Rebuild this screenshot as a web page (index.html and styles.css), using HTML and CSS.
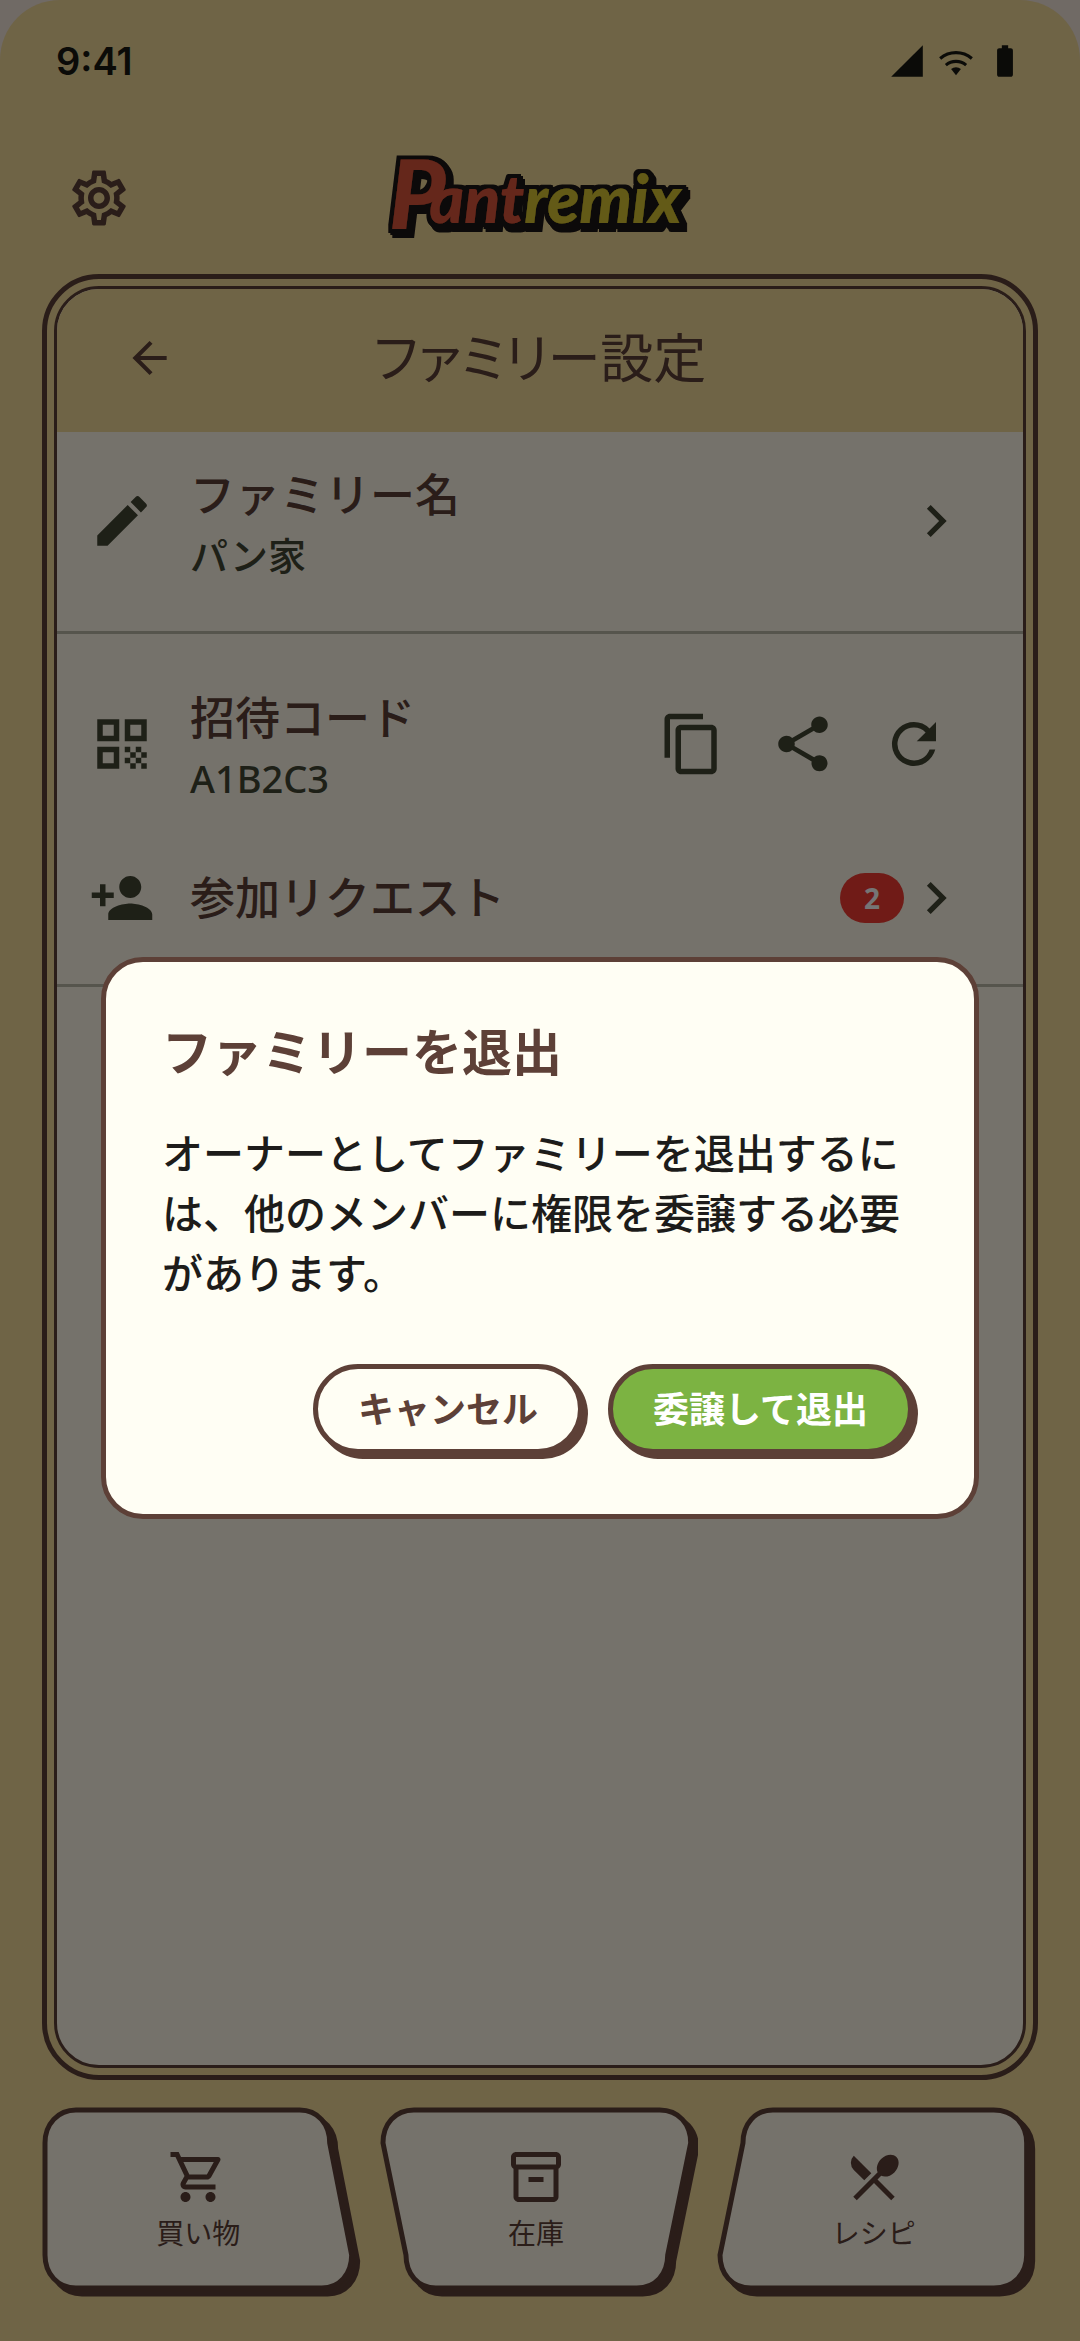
FILE: index.html
```html
<!DOCTYPE html>
<html lang="ja">
<head>
  <meta charset="UTF-8" />
  <title>ファミリー設定</title>
  <meta name="viewport" content="width=device-width, initial-scale=1.0" />
  <link rel="stylesheet" href="styles.css">
</head>
<body>
  <div class="app">
    <div class="status-bar">
      <span class="time">9:41</span>
      <div class="status-icons">
        <svg viewBox="0 0 24 24"><path d="M2 22h20V2z"/></svg>
        <svg viewBox="0 0 24 24"><path d="M12 21l3.100-3.900a4.900 4.900 0 0 0-6.200 0z"/><path class="line" d="M2 10.400a15.400 15.400 0 0 1 20 0M5.600 14.600a10 10 0 0 1 12.800 0"/></svg>
        <svg viewBox="0 0 24 24"><path d="M15.670 4H14V2h-4v2H8.330C7.600 4 7 4.600 7 5.330v15.330C7 21.400 7.600 22 8.330 22h7.330c.74 0 1.340-.6 1.340-1.330V5.330C17 4.600 16.400 4 15.670 4z"/></svg>
      </div>
    </div>

    <header class="app-bar">
      <button class="icon-button" type="button" aria-label="設定">
        <svg viewBox="0 0 24 24"><path d="M19.430 12.980c.04-.32.07-.64.07-.98 0-.34-.03-.66-.07-.98l2.110-1.650c.19-.15.24-.42.12-.64l-2-3.460c-.09-.16-.26-.25-.44-.25-.06 0-.12.010-.17.030l-2.490 1c-.52-.4-1.080-.73-1.690-.98l-.38-2.650C14.460 2.180 14.250 2 14 2h-4c-.25 0-.46.18-.49.42l-.38 2.650c-.61.25-1.170.59-1.690.98l-2.490-1c-.06-.02-.12-.03-.18-.03-.17 0-.34.090-.43.250l-2 3.460c-.13.22-.07.49.12.640l2.110 1.650c-.04.320-.07.650-.07.980s.03.660.070.980l-2.110 1.650c-.19.150-.24.420-.12.640l2 3.460c.09.160.26.250.44.250.06 0 .12-.01.170-.03l2.490-1c.52.400 1.080.730 1.690.980l.38 2.650c.03.240.24.420.49.420h4c.25 0 .46-.18.490-.42l.38-2.650c.61-.25 1.170-.59 1.690-.98l2.490 1c.06.020.12.030.18.030.17 0 .34-.09.430-.25l2-3.460c.12-.22.070-.49-.12-.64l-2.110-1.650zm-1.980-1.710c.04.310.05.520.05.730 0 .21-.02.430-.05.730l-.14 1.130.89.700 1.080.840-.7 1.210-1.270-.51-1.040-.42-.9.680c-.43.320-.84.560-1.250.730l-1.060.43-.16 1.130-.2 1.350h-1.400l-.19-1.350-.16-1.130-1.060-.43c-.43-.18-.83-.41-1.230-.71l-.91-.7-1.060.43-1.270.51-.7-1.210 1.080-.84.89-.7-.14-1.130c-.03-.31-.05-.54-.05-.74s.02-.43.050-.73l.14-1.130-.89-.7-1.080-.84.7-1.210 1.270.51 1.040.42.9-.68c.43-.32.840-.56 1.250-.73l1.060-.43.160-1.130.2-1.350h1.390l.19 1.350.16 1.130 1.060.43c.43.180.83.410 1.230.710l.91.700 1.060-.43 1.270-.51.7 1.210-1.070.850-.89.700.14 1.130zM12 8c-2.210 0-4 1.790-4 4s1.790 4 4 4 4-1.790 4-4-1.790-4-4-4zm0 6c-1.100 0-2-.9-2-2s.9-2 2-2 2 .9 2 2-.9 2-2 2z"/></svg>
      </button>
      <svg class="logo" viewBox="0 0 312 88" role="img" aria-label="Pantremix">
        <!-- black outline with a drop to the lower right -->
        <filter id="outline" x="-10%" y="-20%" width="120%" height="150%">
          <feMorphology in="SourceAlpha" operator="dilate" radius="4" result="fat"/>
          <feOffset in="fat" dx="2" dy="2" result="mid"/>
          <feOffset in="fat" dx="4" dy="5" result="drop"/>
          <feMerge result="shape">
            <feMergeNode in="drop"/>
            <feMergeNode in="mid"/>
            <feMergeNode in="fat"/>
          </feMerge>
          <feFlood flood-color="#1c1616"/>
          <feComposite in2="shape" operator="in" result="black"/>
          <feMerge>
            <feMergeNode in="black"/>
            <feMergeNode in="SourceGraphic"/>
          </feMerge>
        </filter>
        <text class="logo-red" x="5" y="75" filter="url(#outline)"><tspan class="logo-p">P</tspan><tspan dx="-16" dy="-6">ant</tspan><tspan class="logo-yellow">remix</tspan></text>
      </svg>
    </header>

    <main class="frame">
      <div class="panel">
        <div class="panel-header">
          <button class="back-button" type="button" aria-label="戻る">
            <svg viewBox="0 0 24 24"><path class="line" d="M20 12H5M12.500 4.500L5 12l7.500 7.500"/></svg>
          </button>
          <h1>ファミリー設定</h1>
        </div>

        <a class="row" href="#name">
          <svg viewBox="0 0 24 24"><path d="M3 17.250V21h3.750L17.810 9.940l-3.750-3.750L3 17.250zM20.710 7.040a1 1 0 0 0 0-1.410l-2.340-2.340a1 1 0 0 0-1.410 0l-1.830 1.830 3.750 3.750 1.830-1.830z"/></svg>
          <span class="row-text">
            <span class="row-title">ファミリー名</span>
            <span class="row-sub">パン家</span>
          </span>
          <svg class="chevron" viewBox="0 0 24 24"><path d="M10 6L8.590 7.410 13.170 12l-4.580 4.590L10 18l6-6z"/></svg>
        </a>
        <hr>
        <div class="row">
          <svg viewBox="0 0 24 24"><path d="M3 11h8V3H3v8zm2-6h4v4H5V5zM3 21h8v-8H3v8zm2-6h4v4H5v-4zM13 3v8h8V3h-8zm6 6h-4V5h4v4zM19 19h2v2h-2zM13 13h2v2h-2zM15 15h2v2h-2zM13 17h2v2h-2zM15 19h2v2h-2zM17 17h2v2h-2zM17 13h2v2h-2zM19 15h2v2h-2z"/></svg>
          <span class="row-text">
            <span class="row-title">招待コード</span>
            <span class="row-sub">A1B2C3</span>
          </span>
          <div class="row-actions">
            <button type="button" aria-label="コピー">
              <svg viewBox="0 0 24 24"><path d="M16 1H4c-1.100 0-2 .9-2 2v14h2V3h12V1zm3 4H8c-1.100 0-2 .9-2 2v14c0 1.100.9 2 2 2h11c1.100 0 2-.9 2-2V7c0-1.100-.9-2-2-2zm0 16H8V7h11v14z"/></svg>
            </button>
            <button type="button" aria-label="共有">
              <svg viewBox="0 0 24 24"><path d="M18 16.080c-.76 0-1.440.3-1.960.77L8.910 12.700c.05-.23.090-.46.090-.7s-.04-.47-.09-.7l7.050-4.110c.54.500 1.250.810 2.040.810 1.660 0 3-1.340 3-3s-1.340-3-3-3-3 1.340-3 3c0 .24.040.47.090.7L8.040 9.810C7.500 9.310 6.790 9 6 9c-1.660 0-3 1.340-3 3s1.340 3 3 3c.79 0 1.500-.31 2.040-.81l7.120 4.160c-.05.210-.08.430-.08.650 0 1.610 1.310 2.920 2.920 2.920s2.920-1.310 2.920-2.920-1.310-2.920-2.920-2.920z"/></svg>
            </button>
            <button type="button" aria-label="更新">
              <svg viewBox="0 0 24 24"><path d="M17.650 6.350A7.960 7.960 0 0 0 12 4a8 8 0 1 0 7.730 10h-2.080A6 6 0 1 1 12 6c1.660 0 3.140.69 4.220 1.780L13 11h7V4l-2.350 2.350z"/></svg>
            </button>
          </div>
        </div>
        <a class="row row-single" href="#requests">
          <svg viewBox="0 0 24 24"><path d="M15 12c2.210 0 4-1.790 4-4s-1.790-4-4-4-4 1.790-4 4 1.790 4 4 4zm-9-2V7H4v3H1v2h3v3h2v-3h3v-2H6zm9 4c-2.670 0-8 1.340-8 4v2h16v-2c0-2.660-5.330-4-8-4z"/></svg>
          <span class="row-text"><span class="row-title">参加リクエスト</span></span>
          <span class="badge">2</span>
          <svg class="chevron" viewBox="0 0 24 24"><path d="M10 6L8.590 7.410 13.170 12l-4.580 4.590L10 18l6-6z"/></svg>
        </a>
        <hr>
      </div>
    </main>

    <nav class="tabs">
      <a class="tab" href="#shopping">
        <svg class="tab-shape" viewBox="0 0 319 190" preserveAspectRatio="none">
          <path class="tab-shadow" transform="translate(6 6)" d="M34 3H258C276 3 288 17 288 36L310 148C310 167 298 181 280 181H34C16 181 3 167 3 148V36C3 17 16 3 34 3Z"/>
          <path d="M34 3H258C276 3 288 17 288 36L310 148C310 167 298 181 280 181H34C16 181 3 167 3 148V36C3 17 16 3 34 3Z"/>
        </svg>
        <span class="tab-content">
          <svg viewBox="0 0 24 24"><path d="M15.550 13c.75 0 1.410-.41 1.750-1.030l3.580-6.490A.996.996 0 0 0 20.010 4H5.210l-.94-2H1v2h2l3.600 7.590-1.350 2.440C4.520 15.370 5.480 17 7 17h12v-2H7l1.100-2h7.450zM6.160 6h12.150l-2.760 5H8.530L6.160 6zM7 18c-1.100 0-1.990.9-1.990 2S5.900 22 7 22s2-.9 2-2-.9-2-2-2zm10 0c-1.100 0-1.990.9-1.990 2s.89 2 1.990 2 2-.9 2-2-.9-2-2-2z"/></svg>
          <span>買い物</span>
        </span>
      </a>
      <a class="tab" href="#stock">
        <svg class="tab-shape" viewBox="0 0 319 190" preserveAspectRatio="none">
          <path class="tab-shadow" transform="translate(6 6)" d="M34 3H280C299 3 311 17 311 36L288 148C288 167 276 181 257 181H56C38 181 26 167 26 148L3 36C3 17 15 3 34 3Z"/>
          <path d="M34 3H280C299 3 311 17 311 36L288 148C288 167 276 181 257 181H56C38 181 26 167 26 148L3 36C3 17 15 3 34 3Z"/>
        </svg>
        <span class="tab-content">
          <svg viewBox="0 0 24 24"><path d="M20 2H4c-1 0-2 .9-2 2v3.010c0 .72.430 1.340 1 1.690V20c0 1.100 1.100 2 2 2h14c.9 0 2-.9 2-2V8.700c.57-.35 1-.97 1-1.690V4c0-1.100-1-2-2-2zm-1 18H5V9h14v11zm1-13H4V4h16v3zM9 12h6v2H9z"/></svg>
          <span>在庫</span>
        </span>
      </a>
      <a class="tab" href="#recipe">
        <svg class="tab-shape" viewBox="0 0 319 190" preserveAspectRatio="none">
          <path class="tab-shadow" transform="translate(6 6)" d="M56 3H277C297 3 310 17 310 36V148C310 167 297 181 277 181H34C15 181 3 167 3 148L26 36C26 17 38 3 56 3Z"/>
          <path d="M56 3H277C297 3 310 17 310 36V148C310 167 297 181 277 181H34C15 181 3 167 3 148L26 36C26 17 38 3 56 3Z"/>
        </svg>
        <span class="tab-content">
          <svg viewBox="0 0 24 24"><path d="M8.100 13.340l2.830-2.830L3.910 3.500a4.008 4.008 0 0 0 0 5.660l4.190 4.180zm6.780-1.810c1.530.71 3.680.210 5.270-1.380 1.910-1.910 2.280-4.650.81-6.120-1.460-1.460-4.200-1.100-6.120.810-1.590 1.590-2.090 3.740-1.380 5.270L3.700 19.870l1.410 1.410L12 14.410l6.880 6.880 1.410-1.410L13.410 13l1.470-1.470z"/></svg>
          <span>レシピ</span>
        </span>
      </a>
    </nav>
  </div>

  <div class="scrim">
    <section class="dialog" role="dialog" aria-modal="true" aria-labelledby="dialogTitle">
      <h2 id="dialogTitle">ファミリーを退出</h2>
      <p>オーナーとしてファミリーを退出するには、他のメンバーに権限を委譲する必要があります。</p>
      <div class="dialog-actions">
        <button class="pill" type="button">キャンセル</button>
        <button class="pill pill-primary" type="button">委譲して退出</button>
      </div>
    </section>
  </div>
</body>
</html>
```

FILE: styles.css
```css
* {
  box-sizing: border-box;
}
body {
  margin: 0;
  background-color: #f3e6dc;
  color: #434634;
  font-family: "Noto Sans", "Noto Sans CJK JP", sans-serif;
}
h1, h2, p {
  margin: 0;
}
a {
  color: inherit;
  text-decoration: none;
}
button {
  padding: 0;
  border: none;
  background: none;
  color: inherit;
  font-family: inherit;
  cursor: pointer;
}
svg {
  display: block;
  fill: currentColor;
}
.line {
  fill: none;
  stroke: currentColor;
  stroke-width: 2;
}

.app {
  display: flex;
  flex-direction: column;
  min-height: 100vh;
  padding: 0 42px 44px;
  background-color: #f1d99a;
  border-radius: 60px 60px 0 0;
}

/* status bar */
.status-bar {
  display: flex;
  justify-content: space-between;
  align-items: center;
  height: 122px;
  padding: 0 14px;
  color: #1a1a12;
}
.time {
  font-family: Inter, "Noto Sans", sans-serif;
  font-size: 38px;
  font-weight: 600;
}
.status-icons {
  display: flex;
  gap: 11px;
}
.status-icons svg {
  width: 38px;
  height: 38px;
}

/* app bar */
.app-bar {
  display: grid;
  grid-template-columns: 1fr auto 1fr;
  align-items: center;
  height: 152px;
  padding: 0 24px;
  color: #5d4037;
}
.icon-button {
  justify-self: start;
}
.icon-button svg {
  width: 66px;
  height: 66px;
}
.logo {
  width: 312px;
  height: 88px;
  overflow: visible;
  font-family: Lato, sans-serif;
  font-size: 66px;
  font-weight: 900;
  font-style: italic;
}
.logo-p {
  font-size: 96px;
}
.logo-red {
  fill: #dc573b;
}
.logo-yellow {
  fill: #d8c430;
}

/* main panel */
.frame {
  flex: 1;
  display: flex;
  padding: 7px;
  border: 5px solid #5d4037;
  border-radius: 57px;
}
.panel {
  flex: 1;
  overflow: hidden;
  background-color: #fef8e9;
  border: 3px solid #5d4037;
  border-radius: 45px;
}
.panel-header {
  display: grid;
  grid-template-columns: 1fr auto 1fr;
  align-items: center;
  height: 143px;
  padding: 0 68px 6px;
  background-color: #f1d99a;
  color: #5d4037;
}
.panel-header h1 {
  font-size: 53px;
  font-weight: 400;
  line-height: 80px;
  font-feature-settings: "palt";
}
.back-button {
  justify-self: start;
}
.back-button svg {
  width: 50px;
  height: 50px;
}
hr {
  height: 3px;
  margin: 21px 0;
  border: none;
  background-color: #bbb9a8;
}
.row {
  display: flex;
  align-items: center;
  height: 178px;
  padding: 0 55px 0 32px;
}
.row-single {
  height: 130px;
}
.row svg {
  width: 66px;
  height: 66px;
}
.row .chevron {
  width: 64px;
  height: 64px;
}
.row-text {
  flex: 1;
  display: flex;
  flex-direction: column;
  margin-left: 35px;
}
.row-title {
  color: #5d4037;
  font-size: 45px;
  font-weight: 500;
  line-height: 68px;
}
.row-sub {
  font-size: 38px;
  font-weight: 500;
  line-height: 52px;
}
.row-actions {
  display: flex;
  gap: 45px;
  margin-right: 21px;
}
.badge {
  width: 64px;
  border-radius: 25px;
  background-color: #f43c32;
  color: #fff;
  font-size: 28px;
  font-weight: 700;
  line-height: 50px;
  text-align: center;
}

/* bottom tabs */
.tabs {
  display: grid;
  grid-template-columns: repeat(3, 1fr);
  gap: 19px;
  margin-top: 27px;
  padding-right: 2px;
}
.tab {
  display: grid;
  color: #5d4037;
}
.tab-shape, .tab-content {
  grid-area: 1 / 1;
}
.tab-shape {
  width: 100%;
  height: 190px;
  fill: #fef8e9;
  stroke: #5d4037;
  stroke-width: 5;
}
.tab-shadow {
  fill: #5d4037;
}
.tab-content {
  display: flex;
  flex-direction: column;
  align-items: center;
  gap: 6px;
  padding: 40px 6px 0 0;
  font-size: 28px;
  line-height: 40px;
}
.tab-content svg {
  width: 60px;
  height: 60px;
}

/* dialog */
.scrim {
  position: fixed;
  inset: 0;
  display: flex;
  justify-content: center;
  align-items: center;
  padding: 135px 101px 0;
  background-color: rgba(0, 0, 0, 0.54);
}
.dialog {
  width: 100%;
  padding: 56px;
  background-color: #fffef4;
  border: 5px solid #5d4037;
  border-radius: 42px;
}
.dialog h2 {
  color: #5d4037;
  font-size: 50px;
  font-weight: 700;
  line-height: 68px;
}
.dialog p {
  margin-top: 37px;
  color: #1d1c1a;
  font-size: 41px;
  font-weight: 500;
  line-height: 60px;
}
.dialog-actions {
  display: flex;
  justify-content: flex-end;
  gap: 25px;
  margin: 61px 5px 4px 0;
}
.pill {
  height: 90px;
  padding: 0 40px 3px;
  background-color: #fffef4;
  border: 5px solid #5d4037;
  border-radius: 45px;
  box-shadow: 5px 5px 0 #5d4037;
  color: #5d4037;
  font-size: 36px;
  font-weight: 700;
}
.pill-primary {
  background-color: #7cb342;
  color: #fff;
}
```
